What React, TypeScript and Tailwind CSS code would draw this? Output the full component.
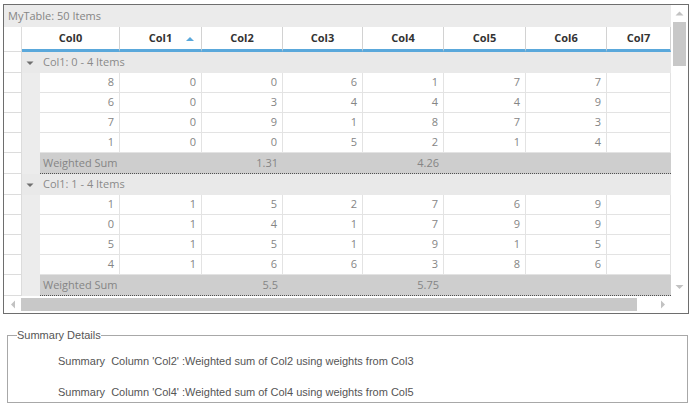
import React from 'react';

const widths = [80, 82, 81, 80, 81, 82, 81, 64];
const headers = ['Col0', 'Col1', 'Col2', 'Col3', 'Col4', 'Col5', 'Col6', 'Col7'];

const groups = [
  {
    label: 'Col1: 0 - 4 Items',
    rows: [
      [8, 0, 0, 6, 1, 7, 7],
      [6, 0, 3, 4, 4, 4, 9],
      [7, 0, 9, 1, 8, 7, 3],
      [1, 0, 0, 5, 2, 1, 4],
    ],
    sums: { 2: '1.31', 4: '4.26' } as Record<number, string>,
  },
  {
    label: 'Col1: 1 - 4 Items',
    rows: [
      [1, 1, 5, 2, 7, 6, 9],
      [0, 1, 4, 1, 7, 9, 9],
      [5, 1, 5, 1, 9, 1, 5],
      [4, 1, 6, 6, 3, 8, 6],
    ],
    sums: { 2: '5.5', 4: '5.75' } as Record<number, string>,
  },
];

function RowHeader({ h }: { h: string }) {
  return <div className={`w-[18px] shrink-0 bg-white border-r border-b border-[#dcdcdc] ${h}`} />;
}

function GroupRow({ label }: { label: string }) {
  return (
    <div className="flex h-[21px]">
      <RowHeader h="h-[21px]" />
      <div className="flex-1 flex items-center bg-[#e9e9e9]">
        <svg width="18" height="21" viewBox="0 0 18 21" className="shrink-0">
          <path d="M4.5 9.5h7l-3.5 3.5z" fill="#6f6f6f" />
        </svg>
        <span className="ml-[3px] text-[#8a8a8a]">{label}</span>
      </div>
    </div>
  );
}

function DataRow({ values }: { values: number[] }) {
  return (
    <div className="flex h-[20px]">
      <RowHeader h="h-[20px]" />
      <div className="w-[18px] shrink-0 bg-[#ececec]" />
      {widths.map((w, i) => (
        <div
          key={i}
          style={{ width: w }}
          className="shrink-0 h-[20px] flex items-center justify-end pr-[5px] bg-white border-r border-b border-[#e3e3e3] text-[#858585]"
        >
          {values[i] ?? ''}
        </div>
      ))}
    </div>
  );
}

function SumRow({ sums }: { sums: Record<number, string> }) {
  return (
    <div className="flex h-[21px]">
      <RowHeader h="h-[21px]" />
      <div className="w-[18px] shrink-0 bg-[#ececec]" />
      <div className="flex-1 flex bg-[#cecece] border-b border-dotted border-[#505050] text-[#858585]">
        {widths.map((w, i) => (
          <div
            key={i}
            style={{ width: w }}
            className={`shrink-0 flex items-center ${i === 0 ? 'justify-start pl-[3px] whitespace-nowrap' : 'justify-end pr-[5px]'}`}
          >
            {i === 0 ? 'Weighted Sum' : sums[i] ?? ''}
          </div>
        ))}
      </div>
    </div>
  );
}

export default function App() {
  return (
    <div className="pl-[3px] pt-[4px] bg-white min-h-[415px] text-[11px]" style={{ fontFamily: '"Open Sans", "Noto Sans", sans-serif' }}>
      <div className="w-[686px] border border-[#6e6e6e] flex flex-col">
        <div className="flex h-[291px]">
          <div className="w-[667px] overflow-hidden flex flex-col">
            <div className="h-[22px] bg-[#ebebeb] flex items-center pl-[4px] text-[#858585]">MyTable: 50 Items</div>
            <div className="flex h-[25px]">
              <RowHeader h="h-[25px]" />
              {headers.map((name, i) => (
                <div
                  key={name}
                  style={{ width: i === 0 ? 98 : widths[i] }}
                  className="shrink-0 h-[25px] relative flex items-center justify-center bg-white border-r border-[#d2d2d2] border-b-[3px] border-b-[#5aa8db] font-bold text-[#333]"
                >
                  {name}
                  {i === 1 && (
                    <svg width="9" height="6" viewBox="0 0 9 6" className="absolute right-[6px] top-[9px]">
                      <path d="M0 5h8L4 1z" fill="#5aa8db" />
                    </svg>
                  )}
                </div>
              ))}
            </div>
            {groups.map((g) => (
              <React.Fragment key={g.label}>
                <GroupRow label={g.label} />
                {g.rows.map((r, j) => (
                  <DataRow key={j} values={r} />
                ))}
                <SumRow sums={g.sums} />
              </React.Fragment>
            ))}
          </div>
          <div className="w-[17px] bg-white flex flex-col items-center">
            <svg width="17" height="17" viewBox="0 0 17 17" className="shrink-0">
              <path d="M4.5 10.5h8l-4 -4z" fill="#c2c2c2" />
            </svg>
            <div className="w-[13px] h-[44px] bg-[#c8c8c8]" />
            <div className="flex-1" />
            <svg width="17" height="17" viewBox="0 0 17 17" className="shrink-0 mb-[1px]">
              <path d="M4.5 7h8l-4 4z" fill="#c2c2c2" />
            </svg>
          </div>
        </div>
        <div className="flex h-[17px] bg-white">
          <div className="w-[667px] flex items-center">
            <svg width="17" height="17" viewBox="0 0 17 17" className="shrink-0">
              <path d="M11 4.5v8l-4 -4z" fill="#c2c2c2" />
            </svg>
            <div className="w-[616px] h-[13px] bg-[#c8c8c8]" />
            <div className="flex-1" />
            <svg width="17" height="17" viewBox="0 0 17 17" className="shrink-0">
              <path d="M7 4.5v8l4 -4z" fill="#c2c2c2" />
            </svg>
          </div>
          <div className="w-[17px]" />
        </div>
      </div>

      <fieldset
        className="mt-[13px] ml-[4px] w-[681px] h-[76px] border border-[#a8a8a8] text-[11px] text-[#555]"
        style={{ fontFamily: '"Liberation Sans", Arial, sans-serif' }}
      >
        <legend className="ml-[9px] px-0">Summary Details</legend>
        <div className="pl-[50px] mt-[10px] leading-[14px]">Summary&nbsp; Column 'Col2' :Weighted sum of Col2 using weights from Col3</div>
        <div className="pl-[50px] mt-[17px] leading-[14px]">Summary&nbsp; Column 'Col4' :Weighted sum of Col4 using weights from Col5</div>
      </fieldset>
    </div>
  );
}
